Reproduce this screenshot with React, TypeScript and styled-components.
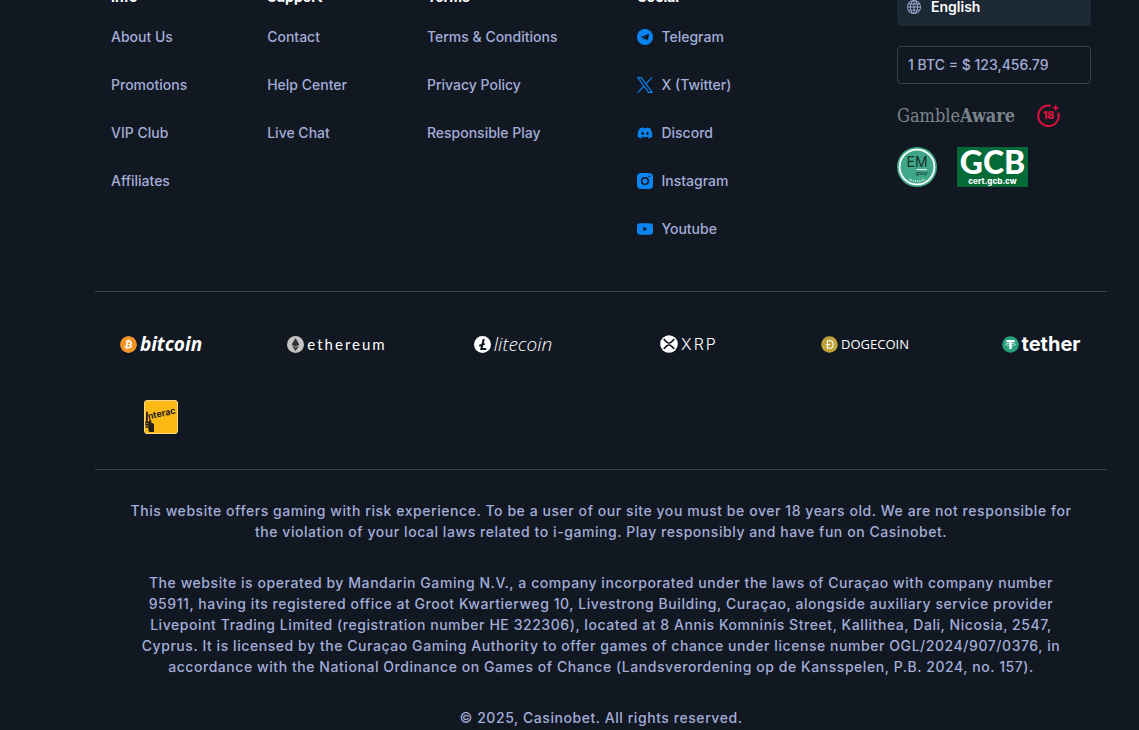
import type { ReactNode } from "react";
import styled, { createGlobalStyle } from "styled-components";
import { FaBitcoin, FaDiscord, FaEthereum } from "react-icons/fa";
import { BsGlobe } from "react-icons/bs";

const color = {
  page: "#111822",
  text: "#a3add8",
  line: "#374152",
  field: "#1d2835",
  blue: "#0a84f1",
};

const GlobalStyle = createGlobalStyle`
  * { box-sizing: border-box; }
  body {
    margin: 0;
    background: ${color.page};
    color: ${color.text};
    font: 500 14px/24px Inter, sans-serif;
    overflow: hidden;
  }
  svg { display: block; flex: none; }
`;

/* The page is shown scrolled down to its footer. */
const Footer = styled.footer`
  margin: -12px 32px 0 95px;
`;

const Top = styled.div`
  display: flex;
  justify-content: space-between;
  padding: 0 16px 50px;
`;

const Columns = styled.nav`
  display: flex;
  gap: 80px;
`;

const Heading = styled.h2`
  margin: 0 0 20px;
  color: #fff;
  font-size: 14px;
  font-weight: 700;
  line-height: 17px;
`;

const LinkList = styled.ul`
  display: flex;
  flex-direction: column;
  gap: 24px;
  margin: 0;
  padding: 0;
  list-style: none;
`;

const FooterLink = styled.a`
  display: flex;
  align-items: center;
  gap: 8px;
  color: inherit;
  text-decoration: none;
  white-space: nowrap;
  svg { color: ${color.blue}; }
`;

const Side = styled.aside`
  display: flex;
  flex-direction: column;
  gap: 20px;
  width: 194px;
`;

const Language = styled.label`
  display: flex;
  align-items: center;
  gap: 10px;
  height: 38px;
  padding: 0 10px;
  border-radius: 4px;
  background: ${color.field};
`;

const LanguageSelect = styled.select`
  flex: 1;
  appearance: none;
  margin: 0;
  padding: 0;
  border: 0;
  background: ${color.field};
  color: #fff;
  font: 600 14px/24px Inter, sans-serif;
`;

const Rate = styled.div`
  height: 38px;
  padding: 0 10px;
  border: 1px solid ${color.line};
  border-radius: 4px;
  line-height: 36px;
`;

const Badges = styled.div`
  display: flex;
  align-items: center;
  gap: 20px;
`;

const BadgeLink = styled.a`
  display: block;
  color: inherit;
  text-decoration: none;
`;

const GambleAware = styled(BadgeLink)`
  width: 120px;
  color: #7b848b;
  font: 400 18px/23px "DejaVu Serif Condensed", "DejaVu Serif", serif;
  white-space: nowrap;
  b { font-weight: 700; }
`;

const Gcb = styled(BadgeLink)`
  display: flex;
  flex-direction: column;
  width: 71px;
  height: 40px;
  background: #046a38;
  color: #fff;
  text-align: center;
`;

const GcbName = styled.span`
  font: 900 32px/30px Lato, sans-serif;
`;

const GcbSite = styled.span`
  font: 800 8px/8px Inter, sans-serif;
`;

const Payments = styled.ul`
  display: grid;
  grid-template-columns: repeat(6, 1fr);
  grid-auto-rows: 36px;
  gap: 37px 44px;
  margin: 0;
  padding: 34px 0;
  border: solid ${color.line};
  border-width: 1px 0;
  list-style: none;
`;

const Payment = styled.li`
  display: flex;
  align-items: center;
  justify-content: center;
  gap: 3px;
  color: #fff;
  white-space: nowrap;
`;

const Wordmark = styled.span<{ $font: string; $spacing?: number }>`
  font: ${(p) => p.$font};
  letter-spacing: ${(p) => p.$spacing ?? 0}px;
`;

const Legal = styled.div`
  display: flex;
  flex-direction: column;
  gap: 30px;
  padding: 30px 32px;
  text-align: center;
  letter-spacing: 0.04em;
  line-height: 21px;
`;

const Paragraph = styled.p`
  margin: 0;
`;

const Telegram = () => (
  <svg width="16" height="16" viewBox="0 0 16 16" aria-hidden="true">
    <circle cx="8" cy="8" r="8" fill="currentColor" />
    <path d="M3.6 8 12 4.7 11 11.6 8.2 9.7 6.7 11 6.5 9.1 10 6.3 5.7 8.8Z" fill={color.page} />
  </svg>
);

const XLogo = () => (
  <svg width="16" height="16" viewBox="0 0 16 16" fill="none" stroke="currentColor" strokeWidth="1.1" aria-hidden="true">
    <path d="M.8.6h3.6l10.8 14.8h-3.6ZM15 .4 8.8 7.1M7 9 .7 15.6" />
  </svg>
);

const Discord = () => (
  <svg width="16" height="16" viewBox="0 0 16 16" aria-hidden="true">
    <FaDiscord x="0" y="0" size={16} />
  </svg>
);

const Instagram = () => (
  <svg width="16" height="16" viewBox="0 0 16 16" aria-hidden="true">
    <rect width="16" height="16" rx="4" fill="currentColor" />
    <circle cx="8" cy="8" r="3.3" fill="none" stroke={color.page} strokeWidth="1.5" />
    <circle cx="12.3" cy="3.4" r=".8" fill={color.page} />
  </svg>
);

const Youtube = () => (
  <svg width="16" height="16" viewBox="0 0 16 16" aria-hidden="true">
    <rect y="2.2" width="16" height="11.6" rx="3" fill="currentColor" />
    <path d="M6.4 5.8v4.4L10.2 8Z" fill={color.page} />
  </svg>
);

const Adult = () => (
  <svg width="23" height="23" viewBox="0 0 24 24" role="img" aria-label="18+">
    <path d="M14.5 1.9A10.7 10.7 0 1 0 22.2 9" fill="none" stroke="#e4103f" strokeWidth="2" />
    <path d="M19.6 1v6M16.6 4h6" stroke="#e4103f" strokeWidth="1.6" />
    <text x="12" y="15.8" textAnchor="middle" fill="#e4103f" fontFamily="Inter, sans-serif" fontWeight="800" fontSize="11">18</text>
  </svg>
);

const EmGroup = () => (
  <svg width="40" height="40" viewBox="0 0 40 40" role="img" aria-label="EM Group">
    <circle cx="20" cy="20" r="20" fill="#3fa787" />
    <circle cx="20" cy="20" r="17.4" fill="none" stroke="#fff" strokeWidth="1.8" />
    <text x="20" y="20" textAnchor="middle" fill="#14302c" fontFamily="Inter, sans-serif" fontWeight="400" fontSize="14">EM</text>
    <path d="M19.5 22.6H30" stroke="#fff" strokeWidth=".9" />
    <text x="24.6" y="28" textAnchor="middle" fill="#14302c" fontFamily="Inter, sans-serif" fontSize="4">group</text>
    <path d="M12 32.2Q20 36.4 28 32.2" fill="none" stroke="#c8e8dc" strokeWidth="1.6" strokeDasharray="1.2 .9" />
  </svg>
);

const Bitcoin = () => (
  <svg width="17" height="17" viewBox="0 0 17 17" aria-hidden="true">
    <circle cx="8.5" cy="8.5" r="8" fill="#fff" />
    <FaBitcoin size={17} color="#f2921f" />
  </svg>
);

const Ethereum = () => (
  <svg width="17" height="17" viewBox="0 0 17 17" aria-hidden="true">
    <circle cx="8.5" cy="8.5" r="8.5" fill="#c4c4c4" />
    <FaEthereum x="2" y="2" size={13} color="#333" />
  </svg>
);

const Litecoin = () => (
  <svg width="17" height="17" viewBox="0 0 17 17" aria-hidden="true">
    <circle cx="8.5" cy="8.5" r="8.5" fill="#fff" />
    <path d="M9.8 3 7.3 12.9h5M5.2 9.9l5.4-2.1" fill="none" stroke={color.page} strokeWidth="2" />
  </svg>
);

const Xrp = () => (
  <svg width="18" height="18" viewBox="0 0 18 18" aria-hidden="true">
    <circle cx="9" cy="9" r="8.8" fill="#fff" />
    <path d="M3.7 4.1 6.5 6.9q2.5 2.2 5 0l2.8-2.8M3.7 13.9l2.8-2.8q2.5-2.2 5 0l2.8 2.8" fill="none" stroke={color.page} strokeWidth="1.6" />
  </svg>
);

const Dogecoin = () => (
  <svg width="17" height="17" viewBox="0 0 17 17" aria-hidden="true">
    <circle cx="8.5" cy="8.5" r="8.3" fill="#bfa33b" />
    <path d="M6.5 4.7h2.3q3.3 0 3.3 3.8t-3.3 3.8H6.5ZM5 8.5h4.2" fill="none" stroke="#fff" strokeWidth="1.1" />
  </svg>
);

const Tether = () => (
  <svg width="17" height="17" viewBox="0 0 17 17" aria-hidden="true">
    <circle cx="8.5" cy="8.5" r="8.3" fill="#26a17b" />
    <path d="M4.3 4h8.4v2.2H9.7v6.9H7.3V6.2h-3Z" fill="#fff" />
    <ellipse cx="8.5" cy="8.4" rx="5" ry="1.1" fill="none" stroke="#fff" strokeWidth=".6" />
  </svg>
);

const Interac = () => (
  <svg width="34" height="34" viewBox="0 0 34 34" role="img" aria-label="Interac">
    <rect x=".5" y=".5" width="33" height="33" rx="2.5" fill="#fdb913" stroke="#fbd78a" />
    <text x="4.4" y="19.4" transform="rotate(-12 4.4 19.4)" fill="#241f18" fontFamily="Inter, sans-serif" fontWeight="700" fontSize="9">nterac</text>
    <path d="M2 12 3.8 11.6v9.9H2Z" fill="#241f18" />
    <path d="M1.2 21.4h3.2v1.8H1.2ZM1.2 23.8h3.2v1.8H1.2ZM1.6 26.2h3v1.6h-3ZM4.4 22l1.4-2.4 1.4.3v2.5l2.8 1.6V32H5.2L4.4 29.6Z" fill="#241f18" />
  </svg>
);

type Item = { label: string; icon?: ReactNode };

const columns: { title: string; items: Item[] }[] = [
  { title: "Info", items: [{ label: "About Us" }, { label: "Promotions" }, { label: "VIP Club" }, { label: "Affiliates" }] },
  { title: "Support", items: [{ label: "Contact" }, { label: "Help Center" }, { label: "Live Chat" }] },
  { title: "Terms", items: [{ label: "Terms & Conditions" }, { label: "Privacy Policy" }, { label: "Responsible Play" }] },
  {
    title: "Social",
    items: [
      { label: "Telegram", icon: <Telegram /> },
      { label: "X (Twitter)", icon: <XLogo /> },
      { label: "Discord", icon: <Discord /> },
      { label: "Instagram", icon: <Instagram /> },
      { label: "Youtube", icon: <Youtube /> },
    ],
  },
];

const payments: { icon: ReactNode; name?: string; font?: string; spacing?: number }[] = [
  { icon: <Bitcoin />, name: "bitcoin", font: 'italic 700 19px/20px "Noto Sans", sans-serif' },
  { icon: <Ethereum />, name: "ethereum", font: "400 15px/20px Lato, sans-serif", spacing: 2 },
  { icon: <Litecoin />, name: "litecoin", font: 'italic 300 19px/20px "Open Sans", sans-serif' },
  { icon: <Xrp />, name: "XRP", font: "300 16px/20px Inter, sans-serif", spacing: 2 },
  { icon: <Dogecoin />, name: "DOGECOIN", font: '400 13px/20px "Open Sans", sans-serif' },
  { icon: <Tether />, name: "tether", font: "700 20px/20px Inter, sans-serif" },
  { icon: <Interac /> },
];

export default function App() {
  return (
    <>
      <GlobalStyle />
      <Footer>
        <Top>
          <Columns aria-label="Footer">
            {columns.map((column) => (
              <section key={column.title}>
                <Heading>{column.title}</Heading>
                <LinkList>
                  {column.items.map((item) => (
                    <li key={item.label}>
                      <FooterLink href="#">
                        {item.icon}
                        {item.label}
                      </FooterLink>
                    </li>
                  ))}
                </LinkList>
              </section>
            ))}
          </Columns>
          <Side>
            <Language>
              <BsGlobe size={14} aria-hidden="true" />
              <LanguageSelect aria-label="Language" defaultValue="en">
                <option value="en">English</option>
              </LanguageSelect>
            </Language>
            <Rate>1 BTC = $ 123,456.79</Rate>
            <Badges>
              <GambleAware href="#">
                Gamble<b>Aware</b>
              </GambleAware>
              <Adult />
            </Badges>
            <Badges>
              <BadgeLink href="#">
                <EmGroup />
              </BadgeLink>
              <Gcb href="#">
                <GcbName>GCB</GcbName>
                <GcbSite>cert.gcb.cw</GcbSite>
              </Gcb>
            </Badges>
          </Side>
        </Top>
        <Payments>
          {payments.map((payment) => (
            <Payment key={payment.name ?? "interac"}>
              {payment.icon}
              {payment.name && (
                <Wordmark $font={payment.font!} $spacing={payment.spacing}>
                  {payment.name}
                </Wordmark>
              )}
            </Payment>
          ))}
        </Payments>
        <Legal>
          <Paragraph>
            This website offers gaming with risk experience. To be a user of our site you must be over 18 years old. We
            are not responsible for the violation of your local laws related to i-gaming. Play responsibly and have fun
            on Casinobet.
          </Paragraph>
          <Paragraph>
            The website is operated by Mandarin Gaming N.V., a company incorporated under the laws of Curaçao with
            company number 95911, having its registered office at Groot Kwartierweg 10, Livestrong Building, Curaçao,
            alongside auxiliary service provider Livepoint Trading Limited (registration number HE 322306), located at 8
            Annis Komninis Street, Kallithea, Dali, Nicosia, 2547, Cyprus. It is licensed by the Curaçao Gaming
            Authority to offer games of chance under license number OGL/2024/907/0376, in accordance with the National
            Ordinance on Games of Chance (Landsverordening op de Kansspelen, P.B. 2024, no. 157).
          </Paragraph>
          <Paragraph>© 2025, Casinobet. All rights reserved.</Paragraph>
        </Legal>
      </Footer>
    </>
  );
}
